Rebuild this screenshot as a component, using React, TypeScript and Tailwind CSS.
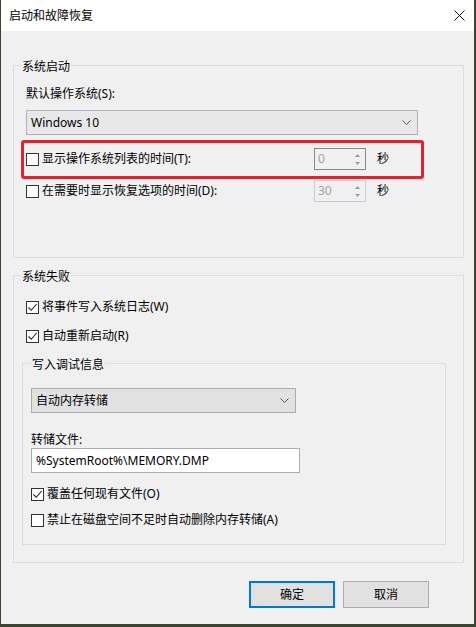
import React from "react";

const Check = ({ checked }: { checked?: boolean }) => (
  <span className="w-[13px] h-[13px] border border-[#333333] bg-white flex items-center justify-center shrink-0">
    {checked && (
      <svg width="11" height="11" viewBox="0 0 11 11" fill="none">
        <path d="M1.5 5.5l2.8 2.8L9.6 2" stroke="#222222" strokeWidth="1.1" />
      </svg>
    )}
  </span>
);

const Chevron = () => (
  <svg width="9" height="5" viewBox="0 0 9 5" fill="none">
    <path d="M0.5 0.5l4 4 4-4" stroke="#555555" strokeWidth="1" />
  </svg>
);

const Spin = ({ value, focused }: { value: string; focused?: boolean }) => (
  <div
    className={`w-[52px] h-[22px] border flex bg-[#f0f0f0] ${
      focused ? "border-[#8a8a8a]" : "border-[#cccccc]"
    }`}
  >
    <span className="flex-1 pl-[3px] leading-[20px] text-[#a3a3a3]">{value}</span>
    <div className="w-[15px] flex flex-col items-center justify-center gap-[5px]">
      <svg width="5" height="3" viewBox="0 0 5 3">
        <path d="M0 3L2.5 0 5 3z" fill="#9a9a9a" />
      </svg>
      <svg width="5" height="3" viewBox="0 0 5 3">
        <path d="M0 0h5L2.5 3z" fill="#9a9a9a" />
      </svg>
    </div>
  </div>
);

export default function App() {
  return (
    <div className="w-[476px] h-[627px] bg-[#3c4529] overflow-hidden text-[12px] leading-[16px] text-black [font-family:'Noto_Sans','Noto_Sans_CJK_SC',sans-serif]">
      <div className="ml-[1px] w-[473px] h-[624px] bg-[#f0f0f0] flex flex-col">
        {/* title bar */}
        <div className="h-[31px] bg-white flex items-center justify-between pl-[8px] pr-[9px]">
          <span>启动和故障恢复</span>
          <svg width="11" height="11" viewBox="0 0 11 11" fill="none">
            <path d="M0.5 0.5l10 10M10.5 0.5l-10 10" stroke="#111111" strokeWidth="1" />
          </svg>
        </div>

        {/* 系统启动 */}
        <fieldset className="ml-[12px] mt-[24px] w-[451px] border border-[#dcdcdc] p-0 pb-[55px]">
          <legend className="ml-[7px] px-[1px] pt-[4px]">系统启动</legend>
          <div className="pl-[12px] mt-[11px]">默认操作系统(S):</div>
          <div className="ml-[12px] mt-[8px] w-[392px] h-[25px] border border-[#a7b3c1] bg-[#e8e8e8] flex items-center justify-between pl-[4px] pr-[6px]">
            <span>Windows 10</span>
            <Chevron />
          </div>
          <div className="relative mt-[13px] flex flex-col gap-[10px]">
            <div className="flex items-center pl-[12px]">
              <div className="w-[288px] flex items-center gap-[3px]">
                <Check />
                <span>显示操作系统列表的时间(T):</span>
              </div>
              <Spin value="0" focused />
              <span className="ml-[11px]">秒</span>
            </div>
            <div className="flex items-center pl-[12px]">
              <div className="w-[288px] flex items-center gap-[3px]">
                <Check />
                <span>在需要时显示恢复选项的时间(D):</span>
              </div>
              <Spin value="30" />
              <span className="ml-[11px]">秒</span>
            </div>
            <div className="absolute left-[7px] top-[-8px] w-[403px] h-[39px] border-[3px] border-[#e3222e] rounded-[3px]" />
          </div>
        </fieldset>

        {/* 系统失败 */}
        <fieldset className="ml-[12px] mt-[7px] w-[451px] border border-[#dcdcdc] p-0 pb-[17px]">
          <legend className="ml-[7px] px-[1px] pt-[4px]">系统失败</legend>
          <div className="mt-[14px] flex items-center gap-[3px] pl-[12px]">
            <Check checked />
            <span>将事件写入系统日志(W)</span>
          </div>
          <div className="mt-[13px] flex items-center gap-[3px] pl-[12px]">
            <Check checked />
            <span>自动重新启动(R)</span>
          </div>

          <fieldset className="ml-[8px] mt-[9px] w-[424px] border border-[#dcdcdc] p-0 pb-[16px]">
            <legend className="ml-[8px] px-[1px] pt-[4px]">写入调试信息</legend>
            <div className="ml-[8px] mt-[15px] w-[265px] h-[25px] border border-[#adadad] bg-[#e1e1e1] flex items-center justify-between pl-[4px] pr-[6px]">
              <span>自动内存转储</span>
              <Chevron />
            </div>
            <div className="pl-[8px] mt-[19px]">转储文件:</div>
            <div className="ml-[8px] w-[269px] h-[25px] border border-[#adadad] bg-white flex items-center pl-[4px]">
              %SystemRoot%\MEMORY.DMP
            </div>
            <div className="mt-[13px] flex items-center gap-[3px] pl-[8px]">
              <Check checked />
              <span>覆盖任何现有文件(O)</span>
            </div>
            <div className="mt-[10px] flex items-center gap-[3px] pl-[8px]">
              <Check />
              <span>禁止在磁盘空间不足时自动删除内存转储(A)</span>
            </div>
          </fieldset>
        </fieldset>

        {/* buttons */}
        <div className="mt-[18px] flex justify-end gap-[8px] pr-[45px]">
          <button className="w-[86px] h-[27px] border-2 border-[#0078d7] bg-[#e1e1e1]">确定</button>
          <button className="w-[86px] h-[27px] border border-[#adadad] bg-[#e1e1e1]">取消</button>
        </div>
      </div>
    </div>
  );
}
